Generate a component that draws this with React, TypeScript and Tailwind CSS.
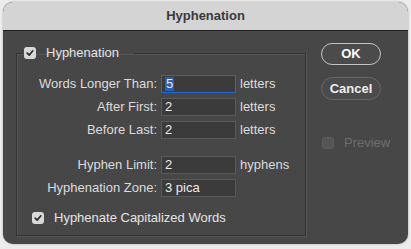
import React from 'react';

const Check = () => (
  <span className="w-[12px] h-[12px] rounded-[3px] bg-[#d8d8d8] flex items-center justify-center shrink-0">
    <svg width="8" height="8" viewBox="0 0 8 8">
      <path d="M1.2 4.2 L3.2 6.1 L6.8 1.8" fill="none" stroke="#2a2a2a" strokeWidth="1.7" strokeLinecap="round" strokeLinejoin="round" />
    </svg>
  </span>
);

interface RowProps {
  label: string;
  value: string;
  unit?: string;
  focused?: boolean;
  className?: string;
}

const FieldRow: React.FC<RowProps> = ({ label, value, unit, focused, className = '' }) => (
  <div className={`flex items-center h-[18px] ${className}`}>
    <span className="w-[140px] text-right text-[#dcdcdc]">{label}</span>
    <div
      className={`ml-[4px] w-[75px] h-[18px] flex items-center pl-[3px] bg-[#3b3b3b] border ${
        focused ? 'border-[#2467d6]' : 'border-[#5a5a5a]'
      } text-[#ececec]`}
    >
      {focused ? <span className="bg-[#2b5fae] px-[1px] leading-[14px]">{value}</span> : value}
    </div>
    {unit && <span className="ml-[4px] text-[#dcdcdc]">{unit}</span>}
  </div>
);

export default function App() {
  return (
    <div className="w-[411px] h-[249px] bg-[#ececec] pl-[3px] pt-[2px] text-[13px] font-['Liberation_Sans',Arial,sans-serif]">
      <div className="w-[405px] h-[242px] rounded-[10px] overflow-hidden flex flex-col bg-[#474747] shadow-[0_0_2px_rgba(0,0,0,0.35)]">
        <div className="h-[29px] shrink-0 bg-[#d4d4d4] border-b border-[#1f1f1f] flex items-center justify-center font-bold text-[#3a3a3a]">
          Hyphenation
        </div>
        <div className="flex flex-1 pl-[13px] pt-[12px]">
          <fieldset className="mt-[3px] w-[290px] h-[190px] border border-[#333333] shadow-[inset_1px_1px_0_#575757,1px_1px_0_#575757]">
            <legend className="ml-[6px] pl-[1px] pr-[15px] h-[14px] flex items-center gap-[10px] text-[#e4e4e4]">
              <Check />
              <span>Hyphenation</span>
            </legend>
            <div className="flex flex-col gap-[5px] mt-[15px]">
              <FieldRow label="Words Longer Than:" value="5" unit="letters" focused />
              <FieldRow label="After First:" value="2" unit="letters" />
              <FieldRow label="Before Last:" value="2" unit="letters" />
              <FieldRow label="Hyphen Limit:" value="2" unit="hyphens" className="mt-[12px]" />
              <FieldRow label="Hyphenation Zone:" value="3 pica" />
              <div className="flex items-center gap-[10px] pl-[15px] mt-[10px] h-[12px] text-[#e4e4e4]">
                <Check />
                <span>Hyphenate Capitalized Words</span>
              </div>
            </div>
          </fieldset>
          <div className="ml-[15px] flex flex-col">
            <button className="w-[60px] h-[22px] rounded-full border-[1.5px] border-[#c4c4c4] bg-[#4b4b4b] text-white font-bold">
              OK
            </button>
            <button className="mt-[12px] w-[60px] h-[23px] rounded-full border-[1.5px] border-[#686868] bg-[#4b4b4b] text-[#ededed] font-bold">
              Cancel
            </button>
            <div className="mt-[33px] ml-[1px] flex items-center gap-[10px] text-[#6e6e6e]">
              <span className="w-[12px] h-[12px] rounded-[3px] bg-[#555555] border border-[#5e5e5e]" />
              <span>Preview</span>
            </div>
          </div>
        </div>
      </div>
    </div>
  );
}
